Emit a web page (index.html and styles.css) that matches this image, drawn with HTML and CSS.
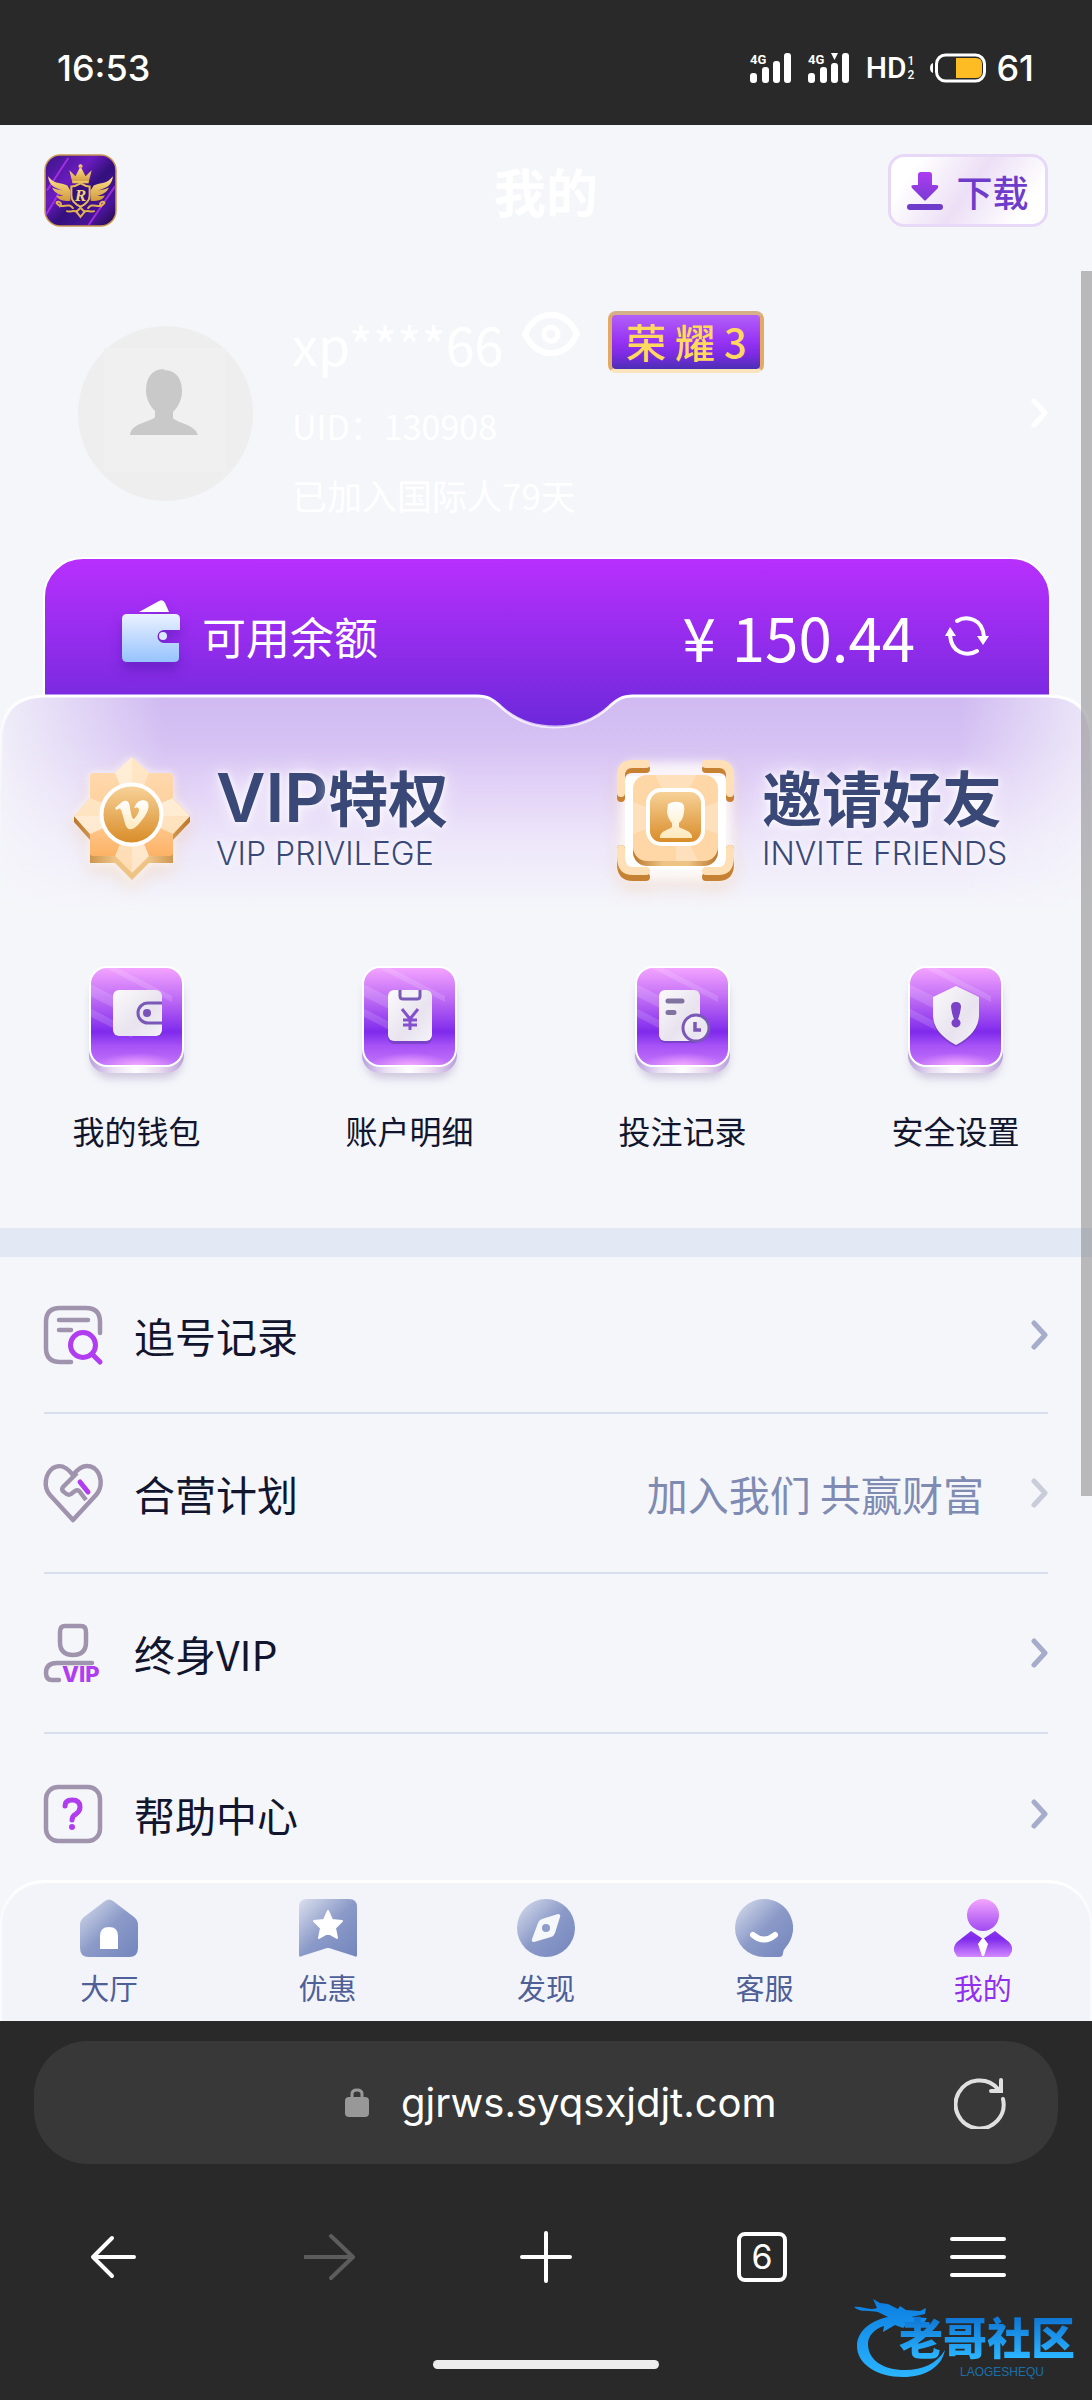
FILE: index.html
```html
<!DOCTYPE html>
<html lang="zh-CN">
<head>
<meta charset="utf-8">
<meta name="viewport" content="width=device-width, initial-scale=1">
<title>我的</title>
<link rel="stylesheet" href="styles.css">
</head>
<body>
<svg class="defs" aria-hidden="true">
  <defs>
    <linearGradient id="tileFill" x1="0" y1="0" x2="0" y2="1">
      <stop offset="0" stop-color="#f3a3ff"/><stop offset=".35" stop-color="#b965f4"/>
      <stop offset=".66" stop-color="#7f2aec"/><stop offset=".8" stop-color="#a652f6"/><stop offset="1" stop-color="#c273fa"/>
    </linearGradient>
    <radialGradient id="tileGlow" cx=".5" cy="1" r=".5">
      <stop offset="0" stop-color="#f5adff"/><stop offset="1" stop-color="#f0a2ff" stop-opacity="0"/>
    </radialGradient>
    <linearGradient id="tileBase">
      <stop offset="0" stop-color="#b79fdc"/><stop offset=".25" stop-color="#e9dff3"/><stop offset=".5" stop-color="#fff"/>
      <stop offset=".75" stop-color="#e9d9ee"/><stop offset="1" stop-color="#b79fdc"/>
    </linearGradient>
    <linearGradient id="glyph" x1="0" y1="0" x2="1" y2="1">
      <stop offset="0" stop-color="#fbfafc"/><stop offset=".6" stop-color="#e8e3ee"/><stop offset="1" stop-color="#f5f2f8"/>
    </linearGradient>
    <linearGradient id="gold" x1="0" y1="0" x2="0" y2="1">
      <stop offset="0" stop-color="#f8d49c"/><stop offset="1" stop-color="#d88a25"/>
    </linearGradient>
    <linearGradient id="peach" x1="0" y1="0" x2="0" y2="1">
      <stop offset="0" stop-color="#ffdcb4"/><stop offset=".5" stop-color="#ffcf99"/><stop offset="1" stop-color="#fba650"/>
    </linearGradient>
    <linearGradient id="depth">
      <stop offset="0" stop-color="#b9772a"/><stop offset=".35" stop-color="#edc386"/><stop offset=".65" stop-color="#edc386"/><stop offset="1" stop-color="#b9772a"/>
    </linearGradient>
    <linearGradient id="cream" x1="0" y1="0" x2="0" y2="1">
      <stop offset="0" stop-color="#fff"/><stop offset="1" stop-color="#ffe9bd"/>
    </linearGradient>
    <linearGradient id="slate" x1="0" y1="0" x2="1" y2="1">
      <stop offset="0" stop-color="#dbe0ee"/><stop offset=".5" stop-color="#8b9ac8"/><stop offset="1" stop-color="#7385bd"/>
    </linearGradient>
    <linearGradient id="violetHead" x1="0" y1="0" x2="0" y2="1">
      <stop offset="0" stop-color="#f3a5fd"/><stop offset="1" stop-color="#a04af2"/>
    </linearGradient>
    <linearGradient id="violetBody" x1="0" y1="0" x2="0" y2="1">
      <stop offset="0" stop-color="#8a35ee"/><stop offset=".3" stop-color="#7f2aec"/><stop offset="1" stop-color="#d388ff"/>
    </linearGradient>
    <filter id="soft" x="-30%" y="-30%" width="160%" height="160%"><feGaussianBlur stdDeviation="5"/></filter>
    <clipPath id="tileClip"><rect x="9" y="8" width="91" height="97" rx="16"/></clipPath>
    <symbol id="tile" viewBox="0 0 110 130">
      <rect x="10" y="18" width="90" height="100" rx="18" fill="#8d7cae" opacity=".4" filter="url(#soft)"/>
      <rect x="7" y="14" width="95" height="99" rx="18" fill="url(#tileBase)"/>
      <rect x="7" y="6" width="95" height="101" rx="18" fill="#fff"/>
      <rect x="9" y="8" width="91" height="97" rx="16" fill="url(#tileFill)"/>
      <g clip-path="url(#tileClip)">
        <path d="M0 20 60 50V62L0 32ZM0 44 50 70V78L0 52ZM20 0 90 36V42L8 0Z" fill="#fff" opacity=".14"/>
        <rect x="14" y="80" width="82" height="26" fill="url(#tileGlow)"/>
      </g>
    </symbol>
    <symbol id="chevron" viewBox="0 0 17 30">
      <path d="M3 3 14 15 3 27" fill="none" stroke="currentColor" stroke-width="5" stroke-linecap="round" stroke-linejoin="round"/>
    </symbol>
  </defs>
</svg>

<div class="phone">
  <header class="status">
    <span class="clock">16:53</span>
    <div class="indicators">
      <svg width="42" height="32" viewBox="0 0 42 32"><g fill="#fff"><rect x="0" y="21" width="7" height="10" rx="3"/><rect x="12" y="15" width="7" height="16" rx="3"/><rect x="23" y="9" width="7" height="22" rx="3"/><rect x="34" y="1" width="7" height="30" rx="3"/><text x="0" y="12" class="net">4G</text></g></svg>
      <svg width="42" height="32" viewBox="0 0 42 32"><g fill="#fff"><rect x="0" y="21" width="7" height="10" rx="3"/><rect x="12" y="15" width="7" height="16" rx="3"/><rect x="23" y="11" width="7" height="20" rx="3"/><path d="M23 1h7l-3.500 7z"/><rect x="34" y="1" width="7" height="30" rx="3"/><text x="0" y="12" class="net">4G</text></g></svg>
      <span class="hd"><span>HD</span><span class="sims"><span>1</span><span>2</span></span></span>
      <svg width="56" height="30" viewBox="0 0 56 30"><rect x="6.500" y="2" width="48" height="26" rx="9" fill="none" stroke="#fff" stroke-width="3"/><path d="M3 10v10q-3-1-3-5t3-5z" fill="#fff"/><path d="M26 5h20q6 0 6 6v8q0 6-6 6H26z" fill="#fdbc24"/></svg>
      <span class="clock">61</span>
    </div>
  </header>

  <div class="page">
    <div class="thumb"></div>
    <header class="topbar">
      <svg class="logo" viewBox="0 0 72 72" role="img" aria-label="logo">
        <defs>
          <linearGradient id="lg" x1="0" y1="0" x2="1" y2="1"><stop offset="0" stop-color="#3a1385"/><stop offset=".35" stop-color="#6b1cc0"/><stop offset=".55" stop-color="#33107c"/><stop offset=".8" stop-color="#4a1499"/><stop offset="1" stop-color="#1a0838"/></linearGradient>
          <linearGradient id="au" x1="0" y1="0" x2="0" y2="1"><stop offset="0" stop-color="#ffe48e"/><stop offset="1" stop-color="#d19a3c"/></linearGradient>
        </defs>
        <rect x="1" y="1" width="70" height="70" rx="15" fill="url(#lg)" stroke="#c9964e" stroke-width="1.500"/>
        <path d="M3 36 24 4M2 60 20 30M44 70 70 32" stroke="#c03af2" stroke-width="2" opacity=".7"/>
        <g fill="url(#au)">
          <path d="M25 16l6 6 5-10 5 10 6-6-3 12H28z"/><circle cx="36" cy="12" r="2"/><rect x="28" y="27" width="16" height="2"/>
          <path d="M4 22c6 8 12 6 19 9l3 5v10c-8 1-12-1-14-5 3 1 6 0 8 0-6-1-10-3-12-8 4 2 7 2 11 3C12 34 5 32 4 22z"/>
          <path d="M68 22c-6 8-12 6-19 9l-3 5v10c8 1 12-1 14-5-3 1-6 0-8 0 6-1 10-3 12-8-4 2-7 2-11 3 7-2 14-4 15-14z"/>
        </g>
        <path d="M36 29q5 3 9 3v9q0 7-9 11-9-4-9-11v-9q4 0 9-3z" fill="#35107c" stroke="#e9bb58" stroke-width="2"/>
        <text x="36" y="46" class="crest">R</text>
        <path d="M12 48c3-3 7 2 3 4M12 48c6 8 12-2 17 6M60 48c-3-3-7 2-3 4M60 48c-6 8-12-2-17 6M22 56c3 2 8-1 10 1M50 56c-3 2-8-1-10 1M36 53l-4 4 4 5 4-5z" fill="none" stroke="#e2b052" stroke-width="2"/>
      </svg>
      <h1>我的</h1>
      <button class="download" type="button">
        <svg width="36" height="38" viewBox="0 0 36 38"><defs><linearGradient id="dl" x1="0" y1="0" x2="0" y2="1"><stop offset="0" stop-color="#ad3cf2"/><stop offset="1" stop-color="#7a3ad3"/></linearGradient></defs><path d="M14 0h8q3 0 3 3v10h4q3 0 2 3L19 28q-1 1-2 0L5 16q-2-3 2-3h4V3q0-3 3-3z" fill="url(#dl)"/><rect x="0" y="32" width="36" height="6" rx="3" fill="#6e3bcb"/></svg>
        <span>下载</span>
      </button>
    </header>

    <a class="profile" href="#profile">
      <svg class="avatar" viewBox="0 0 175 175"><circle cx="87.500" cy="87.500" r="87.500" fill="#eeeeee"/><rect x="26" y="22" width="122" height="124" fill="#f0f0f0"/><path d="M86 44c12 0 18 9 18 21 0 9-4 16-9 21v6c4 5 24 7 25 18v-1H52c1-12 21-13 25-18v-6c-5-5-9-12-9-21 0-12 6-21 18-21z" fill="#c9c9c9"/></svg>
      <div class="who">
        <div class="nameline">
          <span class="name">xp****66</span>
          <svg class="eye" viewBox="0 0 58 44"><path d="M3 22Q12 3 29 3t26 19Q46 41 29 41T3 22z" fill="none" stroke="#fff" stroke-width="6"/><circle cx="29" cy="22" r="7" fill="none" stroke="#fff" stroke-width="5"/></svg>
          <span class="honor">荣 耀 3</span>
        </div>
        <span class="meta uid">UID：130908</span>
        <span class="meta">已加入国际人79天</span>
      </div>
      <svg class="go"><use href="#chevron"/></svg>
    </a>

    <section class="balance">
      <svg class="purse" viewBox="0 0 60 64"><defs><linearGradient id="pw" x1="0" y1="0" x2="0" y2="1"><stop offset="0" stop-color="#eaf1ff"/><stop offset="1" stop-color="#96c3fd"/></linearGradient></defs><path d="M18 12 38 1q4-2 6 2l4 9z" fill="#fff"/><path d="M6 14h48q5 0 5 5v11H43a6.500 6.500 0 0 0 0 13h15v15q0 4-5 4H6q-5 0-5-5V19q0-5 5-5z" fill="url(#pw)"/><circle cx="42" cy="36" r="4" fill="#dbe9ff"/></svg>
      <span class="label">可用余额</span>
      <span class="amount"><span class="yen">¥</span>150.44</span>
      <button class="icon-btn" type="button" aria-label="刷新"><svg width="44" height="40" viewBox="0 0 44 40"><g fill="none" stroke="#fff" stroke-width="4" stroke-linecap="round"><path d="M12 5Q20 0 29 4t10 17"/><path d="M32 35Q24 40 15 36T5 19"/></g><path d="M32 20h12l-6 9zM0 20h11L5 11z" fill="#fff"/></svg></button>
    </section>

    <section class="panel">
      <svg class="panel-bg" viewBox="0 0 1092 240" preserveAspectRatio="none" aria-hidden="true">
        <defs>
          <linearGradient id="pf" x1="0" y1="0" x2="0" y2="1"><stop offset="0" stop-color="#d0baf2"/><stop offset=".2" stop-color="#d6c2f3"/><stop offset=".38" stop-color="#e2d2f7"/><stop offset=".6" stop-color="#ede6fa"/><stop offset=".9" stop-color="#f5f6fa"/></linearGradient>
          <linearGradient id="pe"><stop offset="0" stop-color="#f5f6fa" stop-opacity=".85"/><stop offset=".15" stop-color="#f5f6fa" stop-opacity="0"/><stop offset=".88" stop-color="#f5f6fa" stop-opacity="0"/><stop offset="1" stop-color="#f5f6fa" stop-opacity=".75"/></linearGradient>
          <linearGradient id="ps" x1="0" y1="0" x2="0" y2="1"><stop offset="0" stop-color="#fff"/><stop offset=".4" stop-color="#fff" stop-opacity="0"/></linearGradient>
          <path id="pshape" d="M1 240V46Q1 2 46 2H477C490 2 494 7 500 12C515 26 535 33 555 33C575 33 595 26 610 12C616 7 620 2 633 2H1048Q1091 2 1091 46V240"/>
        </defs>
        <use href="#pshape" fill="url(#pf)"/><use href="#pshape" fill="url(#pe)"/>
        <use href="#pshape" fill="none" stroke="url(#ps)" stroke-width="3"/>
      </svg>
      <div class="medals">
        <a class="medal" href="#vip">
          <svg viewBox="0 0 128 140">
            <path d="M66 7 83 23h24v25l17 18-17 18v30H83l-17 17-17-17H24V84L8 66l16-18V23h25z" fill="#fff" opacity=".8" filter="url(#soft)"/>
            <path d="M66 30 107 31v17l17 18v6l-17 18v23H83l-17 17-17-17H24V90L8 72v-6z" fill="url(#depth)"/>
            <path d="M66 7 83 23h21q3 0 3 3v22l17 18-17 18v19q0 3-3 3H83l-17 17-17-17H27q-3 0-3-3V84L8 66l16-18V26q0-3 3-3h22z" fill="url(#peach)"/>
            <path d="M66 7 83 23 66 64 49 23zM8 66l16-18 42 17-42 19zM124 66l-17-18-41 17 41 19zM66 123l-17-17 17-41 17 41z" fill="#ffe8cb" opacity=".8"/>
            <path d="M66 7v58L49 23zM124 66H66l41-18zM66 65v58l17-17zM66 66H8l16 18z" fill="#fff" opacity=".3"/>
            <circle cx="65.500" cy="64.500" r="30" fill="url(#gold)" stroke="#fff" stroke-width="4"/>
            <path transform="translate(49 48) scale(1.400)" fill="url(#cream)" d="M23.977 6.416c-.105 2.338-1.739 5.543-4.894 9.609-3.268 4.247-6.026 6.370-8.290 6.370-1.409 0-2.578-1.294-3.553-3.881L5.322 11.400C4.603 8.816 3.834 7.522 3.010 7.522c-.179 0-.806.378-1.881 1.132L0 7.197a315 315 0 0 0 3.501-3.128C5.080 2.701 6.266 1.984 7.055 1.910c1.867-.180 3.016 1.100 3.447 3.838.465 2.953.789 4.789.971 5.507.539 2.450 1.131 3.674 1.776 3.674.502 0 1.256-.796 2.265-2.385 1.004-1.589 1.540-2.797 1.612-3.628.144-1.371-.395-2.061-1.614-2.061-.574 0-1.167.121-1.777.391 1.186-3.868 3.434-5.757 6.762-5.637 2.473.060 3.628 1.664 3.493 4.797z"/>
          </svg>
          <span class="medal-text"><span class="medal-title"><span class="latin">VIP</span>特权</span><span class="medal-sub">VIP PRIVILEGE</span></span>
        </a>
        <a class="medal" href="#invite">
          <svg viewBox="0 0 128 140">
            <rect x="8" y="12" width="112" height="118" rx="14" fill="#fff" opacity=".8" filter="url(#soft)"/>
            <path d="M13 26h101v94H13z" fill="#fff"/>
            <g fill="none" stroke-width="8" stroke-linecap="round">
              <g stroke="#c78133"><path d="M9 48V30q0-11 11-11h14M94 19h13q11 0 11 11v18M9 99v15q0 13 12 13h13M94 127h12q12 0 12-13V99"/></g>
              <g stroke="#ffdfb6"><path d="M9 43V26q0-12 11-12h14M94 14h13q11 0 11 12v17M9 99v8q0 14 12 14h13M94 121h12q12 0 12-14V99"/></g>
            </g>
            <rect x="21" y="30" width="85" height="86" rx="14" fill="url(#depth)"/>
            <rect x="21" y="25" width="85" height="86" rx="14" fill="#ffd6a6"/>
            <path d="M64 25h20L64 68 106 52v32L64 68l22 43H64V68L21 84V52l43 16-21-43z" fill="#fff" opacity=".25"/>
            <rect x="36" y="40" width="55" height="54" rx="13" fill="url(#gold)" stroke="#fff" stroke-width="4"/>
            <path d="M56 54q7-4 14-1 3 2 2 9-1 8-5 11v4c4 3 11 3 13 9v2H48v-2c2-6 9-6 12-9v-4q-4-4-5-11z" fill="url(#cream)"/>
          </svg>
          <span class="medal-text"><span class="medal-title">邀请好友</span><span class="medal-sub">INVITE FRIENDS</span></span>
        </a>
      </div>
      <nav class="actions">
        <a href="#wallet"><svg viewBox="0 0 110 130"><use href="#tile"/><path d="M37 32h35q8 0 8 8v36H37q-6 0-6-6V38q0-6 6-6z" fill="#5b3aa0" opacity=".5"/><rect x="31" y="30" width="49" height="46" rx="6" fill="url(#glyph)"/><path d="M80 43H66a10 10 0 0 0 0 20h14" fill="none" stroke="#7a58b8" stroke-width="3"/><circle cx="65" cy="53" r="4" fill="#7a52bb"/></svg><span>我的钱包</span></a>
        <a href="#account"><svg viewBox="0 0 110 130"><use href="#tile"/><rect x="33" y="33" width="44" height="51" rx="6" fill="#5b3aa0" opacity=".5"/><rect x="33" y="30" width="44" height="51" rx="6" fill="url(#glyph)"/><path d="M45 30v6q0 3 3 3h14q3 0 3-3v-6" fill="#f3f0f7" stroke="#7a58b8" stroke-width="3"/><path d="M47 49l8 10 8-10M55 59v11M48 60h14M48 65h14" fill="none" stroke="#8450cf" stroke-width="3"/></svg><span>账户明细</span></a>
        <a href="#bets"><svg viewBox="0 0 110 130"><use href="#tile"/><rect x="31" y="33" width="41" height="50" rx="6" fill="#5b3aa0" opacity=".5"/><rect x="31" y="30" width="41" height="51" rx="6" fill="url(#glyph)"/><path d="M40 41h14M40 52.500h6" stroke="#82729f" stroke-width="5" stroke-linecap="round"/><circle cx="68" cy="68" r="13" fill="url(#glyph)" stroke="#7a58b8" stroke-width="3"/><path d="M67 62v8h6" fill="none" stroke="#7a58b8" stroke-width="3.500"/></svg><span>投注记录</span></a>
        <a href="#safety"><svg viewBox="0 0 110 130"><use href="#tile"/><path d="M55 29 78 40v17q0 18-23 30-23-12-23-30V40z" fill="#5b3aa0" opacity=".5"/><path d="M55 26 78 37v18q0 18-23 30-23-12-23-30V37z" fill="url(#glyph)"/><path d="M55 42q5 0 5 5-1 8-3 12a4.500 4.500 0 1 1-4 0q-2-4-3-12 0-5 5-5z" fill="#7a42c6"/></svg><span>安全设置</span></a>
      </nav>
    </section>

    <nav class="list">
      <a href="#chase"><svg class="li" viewBox="0 0 58 58"><g fill="none" stroke-width="4.500" stroke-linecap="round"><path d="M56 27V16Q56 2 42 2H16Q2 2 2 16v26q0 14 14 14h11M15 14h29M15 24h12" stroke="#a093ad"/><circle cx="39" cy="39" r="12.500" stroke="#b03df0" stroke-width="5"/><path d="m48 48 8 8" stroke="#b03df0" stroke-width="5"/></g></svg><span>追号记录</span><svg class="go"><use href="#chevron"/></svg></a>
      <a href="#partner"><svg class="li" viewBox="0 0 58 58"><g fill="none" stroke="#a093ad" stroke-width="4.500" stroke-linejoin="round"><path d="M29 56 6 31C-1 23 1 10 9 4c7-4 13-2 20 7C36 2 43 0 50 4c8 6 9 19 2 27z"/><path d="M33 9 19 23q-2 3 1 5 4 4 7 2l4-3q3-2 5 1l6 8"/><path d="m36 18 8 10" stroke="#b03df0" stroke-linecap="round" stroke-width="5"/></g></svg><span>合营计划</span><em>加入我们 共赢财富</em><svg class="go pale"><use href="#chevron"/></svg></a>
      <a href="#life"><svg class="li" viewBox="0 0 58 58"><path d="M21 2h16q5 0 5 6v10q0 13-13 13T16 18V8q0-6 5-6zM48 39H13Q2 39 2 49q0 7 6 7h7" fill="none" stroke="#a093ad" stroke-width="4.500" stroke-linecap="round"/><text x="18" y="58" class="vip-mark">VIP</text></svg><span>终身VIP</span><svg class="go"><use href="#chevron"/></svg></a>
      <a href="#help"><svg class="li" viewBox="0 0 58 58"><rect x="2" y="2" width="54" height="54" rx="12" fill="none" stroke="#a093ad" stroke-width="4.500"/><path d="M21 21q0-6 7-6 8 0 8 7 0 4-4 7-4 2-4 6" fill="none" stroke="#b03df0" stroke-width="5" stroke-linecap="round"/><circle cx="28" cy="42" r="3" fill="#b03df0"/></svg><span>帮助中心</span><svg class="go"><use href="#chevron"/></svg></a>
    </nav>

    <nav class="tabs">
      <a href="#hall"><svg viewBox="0 0 58 58"><path d="M25 2q4-3 8 0l21 16q4 3 4 8v23q0 9-9 9H9q-9 0-9-9V26q0-5 4-8z" fill="url(#slate)"/><path d="M20 50V37q0-9 9-9t9 9v13z" fill="#fff"/></svg><span>大厅</span></a>
      <a href="#promo"><svg viewBox="0 0 58 58"><path d="M8 0h42q8 0 8 8v48q0 3-3 1L33 50q-4-2-8 0L3 57q-3 2-3-1V8q0-8 8-8z" fill="url(#slate)"/><path d="m29 12 4 9 10 1-7 7 2 10-9-5-9 5 2-10-7-7 10-1z" fill="#fff" stroke="#fff" stroke-width="2" stroke-linejoin="round"/></svg><span>优惠</span></a>
      <a href="#discover"><svg viewBox="0 0 58 58"><circle cx="29" cy="29" r="29" fill="url(#slate)"/><path d="M25 20 41 15q3 0 2 3l-5 16q-1 3-4 4L17 43q-3 0-2-3l6-16q1-3 4-4z" fill="#f6f7fb"/><circle cx="29" cy="29" r="4" fill="#8e9cca"/></svg><span>发现</span></a>
      <a href="#service"><svg viewBox="0 0 58 58"><path d="M29 0a29 29 0 0 1 22 48q-3 3-3 6 0 4-4 4H29a29 29 0 0 1 0-58z" fill="url(#slate)"/><path d="M18 36q11 9 22 0" fill="none" stroke="#fff" stroke-width="6" stroke-linecap="round"/></svg><span>客服</span></a>
      <a class="on" href="#me" aria-current="page"><svg viewBox="0 0 58 58"><circle cx="29" cy="16" r="16" fill="url(#violetHead)"/><path d="M17 32 29 40 41 32 55 43q4 4 3 9l-2 4q-1 2-3 2H5q-2 0-3-2l-2-4q-1-5 3-9z" fill="url(#violetBody)"/><path d="m29 38 5 7-4 12h-2l-4-12z" fill="#fff"/></svg><span>我的</span></a>
    </nav>
  </div>

  <footer class="browser">
    <form class="address">
      <div class="url">
        <svg width="24" height="30" viewBox="0 0 24 30"><rect y="9" width="24" height="20" rx="4" fill="#989898"/><path d="M7 10V6q0-4 5-4t5 4v4" fill="none" stroke="#989898" stroke-width="3"/></svg>
        <input type="text" aria-label="网址" value="gjrws.syqsxjdjt.com">
      </div>
      <button class="icon-btn" type="button" aria-label="重新加载"><svg width="52" height="52" viewBox="0 0 52 52"><path d="M49 22A24 24 0 1 1 44 12" fill="none" stroke="#e0e0e0" stroke-width="4" stroke-linecap="round"/><path d="M47 3v11H37" fill="none" stroke="#e0e0e0" stroke-width="4" stroke-linecap="round"/></svg></button>
    </form>
    <div class="controls">
      <button class="icon-btn" type="button" aria-label="后退"><svg width="52" height="52" viewBox="0 0 52 52"><path d="M46 26H6M24 7 5 26l19 19" /></svg></button>
      <button class="icon-btn dim" type="button" aria-label="前进" disabled><svg width="52" height="52" viewBox="0 0 52 52"><path d="M1 26h48M27 5l22 21-22 21"/></svg></button>
      <button class="icon-btn" type="button" aria-label="新标签页"><svg width="52" height="52" viewBox="0 0 52 52"><path d="M26 2v48M2 26h48"/></svg></button>
      <button class="icon-btn count" type="button" aria-label="标签页">6</button>
      <button class="icon-btn" type="button" aria-label="菜单"><svg width="58" height="52" viewBox="0 0 58 52"><path d="M3 8h52M3 26h52M3 44h52"/></svg></button>
    </div>
    <div class="home"></div>
    <div class="watermark">
      <svg width="92" height="80" viewBox="0 0 92 80"><defs><linearGradient id="wm" x1="0" y1="0" x2="0" y2="1"><stop offset="0" stop-color="#0b7de0"/><stop offset="1" stop-color="#2bb4ff"/></linearGradient></defs><path d="M35 19C16 23 4 34 4 48c0 18 20 31 46 31 22 0 39-10 42-27-9 14-22 20-40 20-22 0-37-10-37-26 0-8 6-15 16-18l-1 6 12-7 8 3 4-4 17-1 3-5-16-1 14-3 1-6-6 3-14-1-6-4-2 3-10-5-8-1-7-4 4 9c-8 3-15-2-23-1 6 6 16 3 24 5z" fill="url(#wm)"/></svg>
      <div class="wm-text"><strong>老哥社区</strong><small>LAOGESHEQU</small></div>
    </div>
  </footer>
</div>
</body>
</html>
```

FILE: styles.css
```css
* { box-sizing: border-box; }
body {
  margin: 0;
  background: #292929;
  font-family: "Noto Sans CJK SC", "Noto Sans", sans-serif;
  color: #11152e;
}
a { color: inherit; text-decoration: none; }
svg { display: block; flex: none; }
button { font-family: inherit; border: 0; padding: 0; background: none; color: inherit; }
.defs { position: absolute; width: 0; height: 0; }
.phone { display: flex; flex-direction: column; min-height: 100vh; }

/* system status bar */
.status {
  display: flex;
  justify-content: space-between;
  align-items: center;
  height: 125px;
  padding: 10px 58px 0 57px;
  background: #292929;
  color: #fff;
}
.clock { font: 500 36px/44px Inter, sans-serif; }
.indicators { display: flex; align-items: center; gap: 16px; }
.indicators .clock { margin-left: -6px; }
.net { font: 700 13px Roboto, sans-serif; }
.hd { display: flex; align-items: center; gap: 1px; font: 500 30px/36px Roboto, sans-serif; }
.sims { display: flex; flex-direction: column; font-size: 12px; line-height: 14px; }

/* page */
.page { position: relative; flex: 1; background: #f5f6fa; }
.thumb {
  position: absolute;
  z-index: 3;
  top: 146px;
  right: 0;
  width: 11px;
  height: 1225px;
  background: rgba(120, 120, 120, .48);
}
.topbar {
  display: grid;
  grid-template-columns: 1fr auto 1fr;
  align-items: center;
  padding: 29px 44px 27px;
}
.logo { width: 73px; height: 73px; }
.crest { font: italic 700 17px "Liberation Serif", serif; fill: #f3d27c; text-anchor: middle; }
h1 { margin: 0; font-size: 52px; line-height: 72px; font-weight: 700; color: #fff; }
.download {
  justify-self: end;
  display: flex;
  align-items: center;
  justify-content: center;
  gap: 13px;
  width: 160px;
  height: 73px;
  border: 3px solid #e8d8f8;
  border-radius: 16px;
  background: linear-gradient(125deg, #fff 15%, #ecdff6 50%, #fff 85%);
  color: #6e3bcb;
  font-size: 36px;
  line-height: 44px;
  font-weight: 500;
}

.profile {
  display: flex;
  align-items: center;
  padding: 54px 44px 39px 78px;
  color: #fff;
}
.avatar { width: 175px; height: 175px; }
.who { flex: 1; display: flex; flex-direction: column; gap: 23px; margin-left: 39px; }
.nameline { display: flex; align-items: center; height: 72px; }
.name { font-size: 52px; line-height: 72px; }
.eye { width: 58px; height: 44px; margin: 0 28px 20px 19px; }
.honor {
  width: 156px;
  height: 62px;
  margin-bottom: 4px;
  border: 4px solid #e9c08a;
  border-color: #d5b088 #e3aa66 #fbe3bd;
  border-radius: 8px;
  background: linear-gradient(#b25ff8, #9632f4 50%, #7a2be0 75%, #4a2fb4);
  color: #ffd95e;
  font-size: 40px;
  line-height: 52px;
  font-weight: 500;
  text-align: center;
}
.meta { font-size: 35px; line-height: 46px; }
.uid { font-size: 34px; }
.go { width: 17px; height: 30px; color: #a5adcb; }
.profile .go { color: #fff; }
.go.pale { color: #c9ccd9; }

.balance {
  display: flex;
  align-items: center;
  height: 178px;
  margin: 0 41px 0 43px;
  padding: 0 60px 20px 76px;
  border: 2px solid #fff;
  border-radius: 40px 40px 0 0;
  background: linear-gradient(#b830fd, #6a28d9);
  color: #fff;
}
.purse { width: 60px; height: 64px; margin-bottom: 8px; filter: drop-shadow(0 8px 6px rgba(70, 20, 160, .4)); }
.label { flex: 1; margin-left: 21px; font-size: 44px; line-height: 64px; }
.amount { display: flex; align-items: center; gap: 16px; margin-right: 30px; font-size: 60px; line-height: 84px; }
.icon-btn { display: flex; align-items: center; justify-content: center; }

.panel { position: relative; margin-top: -41px; }
.panel-bg { position: absolute; top: 0; left: 0; width: 100%; height: 240px; }
.medals { position: relative; display: grid; grid-template-columns: 1fr 1fr; padding-top: 56px; }
.medal { display: flex; align-items: center; gap: 22px; padding-left: 66px; color: #3a4878; }
.medal svg { width: 128px; height: 140px; filter: drop-shadow(0 8px 8px rgba(240, 190, 130, .3)); }
.medal-text { display: flex; flex-direction: column; padding-bottom: 8px; text-shadow: 0 0 20px #fff, 0 0 6px #fff; white-space: nowrap; }
.medal-title { font-size: 60px; line-height: 76px; font-weight: 700; }
.latin { font-family: Inter, sans-serif; font-size: 68px; line-height: 60px; font-weight: 600; }
.medal-sub { font-family: Inter, sans-serif; font-size: 32px; line-height: 40px; font-weight: 300; }

.actions { position: relative; display: grid; grid-template-columns: repeat(4, 1fr); padding: 70px 0 76px; }
.actions a { display: flex; flex-direction: column; align-items: center; gap: 18px; font-size: 32px; line-height: 44px; }
.actions svg { width: 110px; height: 130px; }

.list { padding: 0 44px; border-top: 29px solid #e2e8f4; }
.list a {
  display: flex;
  align-items: center;
  height: 160px;
  border-bottom: 2px solid #d7deed;
  font-size: 41px;
  line-height: 60px;
}
.list a:first-child { height: 157px; }
.list a:last-child { border-bottom: 0; }
.list span { flex: 1; margin-left: 32px; }
.list em { margin-right: 47px; font-style: normal; color: #7f8bb2; }
.li { width: 58px; height: 58px; overflow: visible; }
.vip-mark { font: 800 22px Inter, sans-serif; fill: #b03df0; }

.tabs {
  position: relative;
  display: grid;
  grid-template-columns: repeat(5, 1fr);
  margin-top: -14px;
  padding: 16px 0 14px;
  border-top: 3px solid #fff;
  border-radius: 44px 44px 0 0;
  box-shadow: inset 2px 0 0 #fafbfd, inset -2px 0 0 #fafbfd;
  background: #f2f4f9;
}
.tabs a { display: flex; flex-direction: column; align-items: center; gap: 10px; font-size: 29px; line-height: 40px; color: #4f5f98; }
.tabs svg { width: 58px; height: 58px; }
.tabs .on { color: #9030ee; }

/* browser toolbar */
.browser { position: relative; padding-bottom: 31px; background: #292929; color: #fff; }
.address {
  display: flex;
  align-items: center;
  height: 123px;
  margin: 20px 34px 0;
  padding-right: 52px;
  border-radius: 54px;
  background: #383838;
}
.url { flex: 1; display: flex; align-items: center; justify-content: center; gap: 32px; padding-left: 148px; }
.url input {
  width: 390px;
  padding: 0;
  border: 0;
  background: none;
  color: #fff;
  font: 400 40px/48px Inter, sans-serif;
}
.controls { display: grid; grid-template-columns: repeat(5, 1fr); height: 186px; padding: 0 6px; justify-items: center; align-items: center; }
.controls svg { fill: none; stroke: #fff; stroke-width: 4; stroke-linecap: round; stroke-linejoin: round; }
.controls .dim svg { stroke: #5c5c5c; }
.count { width: 50px; height: 50px; border: 4px solid #fff; border-radius: 8px; color: #fff; font: 400 34px/40px Inter, sans-serif; }
.home { width: 226px; height: 9px; margin: 10px auto 0; border-radius: 5px; background: #ededed; }
.watermark { position: absolute; right: 17px; bottom: 22px; display: flex; align-items: flex-end; color: #1e9bf3; }
.wm-text { display: flex; flex-direction: column; margin-left: -46px; }
.wm-text strong { font-size: 44px; line-height: 60px; font-weight: 900; background: linear-gradient(#0f76d4 20%, #2bb4ff 85%); background-clip: text; color: transparent; }
.wm-text small { align-self: center; margin-left: 30px; font: 400 12px/12px "Liberation Sans", sans-serif; color: #1b6fa8; }
```
